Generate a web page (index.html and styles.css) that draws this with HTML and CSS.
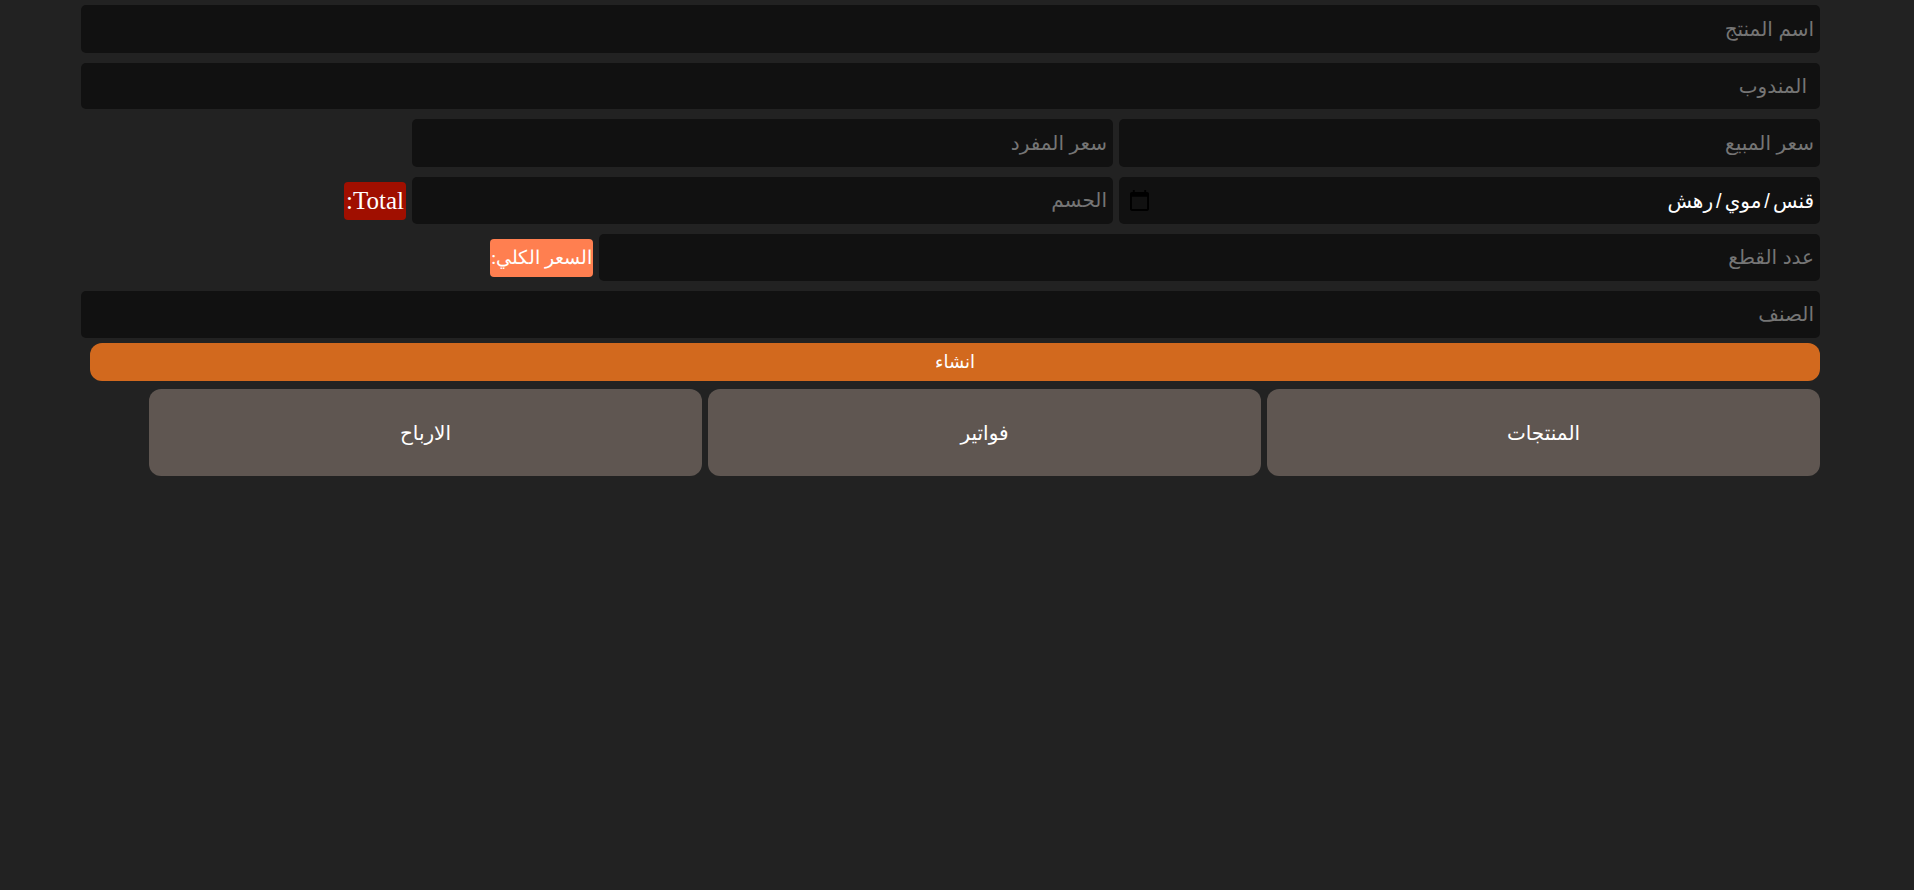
FILE: index.html
```html
<!DOCTYPE html>
<html lang="ar" dir="rtl">
<head>
<meta charset="utf-8">
<title>المنتجات</title>
<link rel="stylesheet" href="styles.css">
</head>
<body>
<main class="page">
  <form class="form">
    <input class="field field-full field-tall" type="text" placeholder="اسم المنتج">
    <input class="field field-full field-short field-agent" type="text" placeholder="المندوب">
    <div class="row">
      <input class="field field-half field-tall" type="text" placeholder="سعر المبيع">
      <input class="field field-half field-tall" type="text" placeholder="سعر المفرد">
    </div>
    <div class="row">
      <div class="field field-half date-field">
        <span class="date-text">قنس<span class="date-sep">/</span>موي<span class="date-sep">/</span>رهش</span>
        <svg class="cal-icon" viewBox="2 1 20 22" width="19" height="21" aria-hidden="true">
          <path d="M20 3h-1V1h-2v2H7V1H5v2H4c-1.1 0-2 .9-2 2v16c0 1.1.9 2 2 2h16c1.1 0 2-.9 2-2V5c0-1.1-.9-2-2-2zm0 18H4V8h16v13z" fill="#000"/>
        </svg>
      </div>
      <input class="field field-half" type="text" placeholder="الحسم">
      <span class="badge badge-total">Total:</span>
    </div>
    <div class="row">
      <input class="field field-count" type="text" placeholder="عدد القطع">
      <span class="badge badge-sum">السعر الكلي:</span>
    </div>
    <input class="field field-full" type="text" placeholder="الصنف">
    <button class="btn-create" type="button">انشاء</button>
  </form>
  <nav class="nav">
    <button class="nav-btn" type="button">المنتجات</button>
    <button class="nav-btn" type="button">فواتير</button>
    <button class="nav-btn" type="button">الارباح</button>
  </nav>
</main>
</body>
</html>
```

FILE: styles.css
```css
html, body {
  margin: 0;
  padding: 0;
  background: #222222;
  height: 100%;
}

body {
  font-family: "Liberation Sans", "DejaVu Sans", sans-serif;
  color: #ffffff;
}

.page {
  width: 1739px;
  margin-right: 94px;
  padding-top: 5px;
}

.form {
  display: flex;
  flex-direction: column;
  align-items: flex-start;
  gap: 10px;
}

.row {
  display: flex;
  align-items: center;
  gap: 6px;
}

.field {
  box-sizing: border-box;
  height: 47px;
  border: none;
  outline: none;
  border-radius: 5px;
  background: #111111;
  color: #ffffff;
  font-family: "Liberation Sans", "DejaVu Sans", sans-serif;
  font-size: 20px;
  padding: 0 6px;
  text-align: right;
  margin: 0;
}

.field::placeholder {
  color: #757575;
}

.field-tall { height: 48px; }
.field-short { height: 46px; }
.field-agent { padding-right: 13px; }

.field-full { width: 1739px; }
.field-half { width: 701px; }
.field-count { width: 1221px; }

.date-field {
  display: flex;
  align-items: center;
  justify-content: space-between;
  padding: 0 6px 0 11px;
}

.date-text {
  color: #ffffff;
  font-size: 20px;
  white-space: nowrap;
}

.date-sep {
  padding: 0 3px;
}

.cal-icon {
  display: block;
}

.badge {
  box-sizing: border-box;
  height: 38px;
  display: flex;
  align-items: center;
  justify-content: center;
  border-radius: 4px;
  color: #ffffff;
  white-space: nowrap;
  font-family: "Liberation Serif", "DejaVu Serif", serif;
}

.badge-total {
  width: 62px;
  background: #a00f00;
  font-size: 25px;
}

.badge-sum {
  width: 103px;
  background: #ff7f50;
  font-size: 19px;
  overflow: hidden;
}

.btn-create {
  width: 1730px;
  height: 38px;
  margin-top: -5px;
  border: none;
  border-radius: 12px;
  background: #d2691e;
  color: #ffffff;
  font-family: "Liberation Sans", "DejaVu Sans", sans-serif;
  font-size: 18px;
  cursor: pointer;
}

.nav {
  display: flex;
  gap: 6px;
  margin-top: 8px;
}

.nav-btn {
  width: 553px;
  height: 87px;
  border: none;
  border-radius: 12px;
  background: #5f5651;
  color: #ffffff;
  font-family: "Liberation Sans", "DejaVu Sans", sans-serif;
  font-size: 20px;
  cursor: pointer;
}
```
